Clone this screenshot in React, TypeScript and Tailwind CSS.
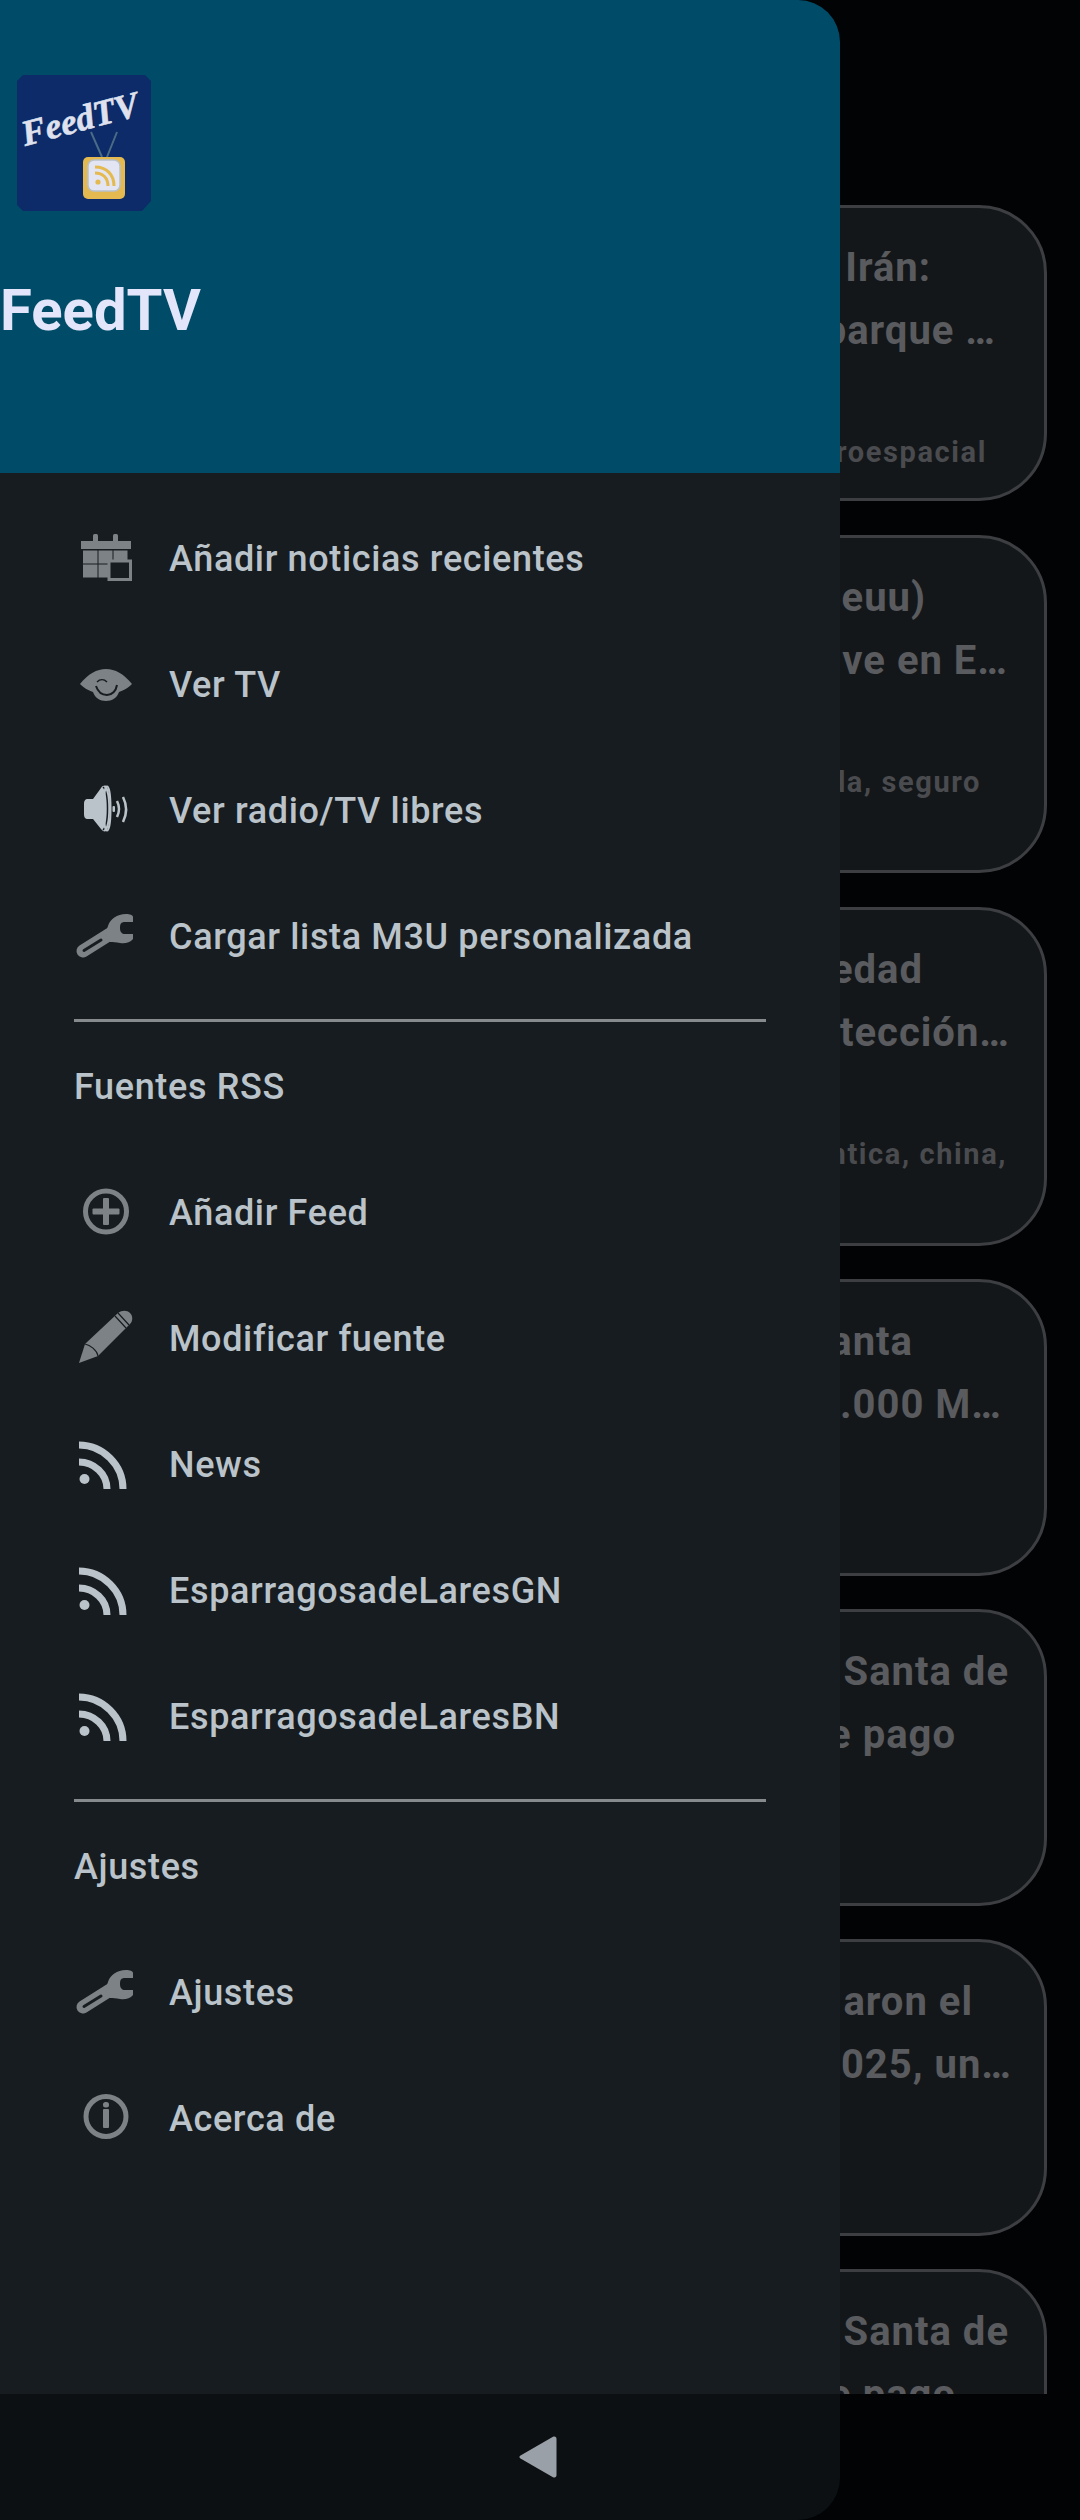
const Gray = "#7d8286";
const Light = "#bac3c9";
const Bg = "#171c20";

function Svg({ children }: { children: React.ReactNode }) {
  return (
    <svg viewBox="0 0 64 64" className="w-16 h-16 shrink-0">
      {children}
    </svg>
  );
}

const Calendar = () => (
  <Svg>
    <rect x="19" y="8" width="5" height="10" rx="1.5" fill={Gray} />
    <rect x="39" y="8" width="5" height="10" rx="1.5" fill={Gray} />
    <rect x="7" y="15" width="50" height="8" fill={Gray} />
    <g fill={Gray}>
      <rect x="9" y="24.500" width="14.500" height="13" />
      <rect x="24.500" y="24.500" width="14" height="13" />
      <rect x="39.500" y="24.500" width="14" height="13" />
      <rect x="9" y="38.500" width="14.500" height="13" />
      <rect x="24.500" y="38.500" width="10" height="13" />
    </g>
    <rect x="35" y="35" width="21.5" height="18.5" fill={Bg} stroke={Gray} strokeWidth="3" />
  </Svg>
);

const Eye = () => (
  <Svg>
    <path d="M6 32C14 22 23 17 32 17C41 17 50 22 58 32C53 37 48 39 45 40C43 46 38 49 32 49C26 49 21 46 19 40C16 39 11 37 6 32Z" fill={Gray} />
    <path d="M22 34C24 40 28 43 33 43C38 43 42 39 43 33" fill="none" stroke={Bg} strokeWidth="2" />
    <path d="M23 30C26 27 30 27 33 30" fill="none" stroke={Bg} strokeWidth="1.5" />
  </Svg>
);

const Speaker = () => (
  <Svg>
    <path d="M14 21H19L27 10C29 7 32 7 33 9C37 15 37 46 33 52C32 54 29 54 27 51L19 41H14C11 41 10 39 10 36V26C10 23 11 21 14 21Z" fill={Light} />
    <path d="M29 9C35 14 35 47 29 52" fill="none" stroke={Bg} strokeWidth="1.5" />
    <ellipse cx="33" cy="30.5" rx="3.5" ry="22" fill="none" stroke={Light} strokeWidth="2" />
    <rect x="38.500" y="28" width="2.500" height="6" rx="1" fill={Light} />
    <path d="M43 23C45.500 28 45.500 34 43 39" fill="none" stroke={Light} strokeWidth="2.500" />
    <path d="M49 19C53 27 53 36 49 44" fill="none" stroke={Light} strokeWidth="2.500" />
  </Svg>
);

const Wrench = () => (
  <Svg>
    <path d="M9 47L36 30" stroke={Gray} strokeWidth="13" strokeLinecap="round" fill="none" />
    <path d="M10 46.500L27 36" stroke={Bg} strokeWidth="3" strokeLinecap="round" fill="none" />
    <path d="M34 22C36 15 43 10 52 10C56 10 59 11 59 13L59 18L51 18C47 18 46 20 46 24C46 28 48 30 51 30L59 30L59 35C56 39 50 40 46 39C42 38 39 38 36 38L31 30Z" fill={Gray} />
  </Svg>
);

const Plus = () => (
  <Svg>
    <circle cx="32" cy="31.500" r="20.500" fill="none" stroke={Gray} strokeWidth="5" />
    <rect x="29" y="18" width="6" height="27" rx="1" fill={Gray} />
    <rect x="18.500" y="28.500" width="27" height="6" rx="1" fill={Gray} />
  </Svg>
);

const Pencil = () => (
  <Svg>
    <path d="M5 57L11 38L44 7C48 4 53 4 56 7C59 10 59 15 56 18L24 50Z" fill={Gray} />
    <path d="M11 38C16 39 23 44 24 50M41 10L52 22M44 7L55 19" fill="none" stroke={Bg} strokeWidth="1.2" />
  </Svg>
);

const Rss = () => (
  <Svg>
    <circle cx="10.500" cy="47" r="5" fill={Light} />
    <path d="M5 30C20 30 33 42 33 57" fill="none" stroke={Light} strokeWidth="7" />
    <path d="M5 13C29 13 49 33 49 57" fill="none" stroke={Light} strokeWidth="7" />
  </Svg>
);

const Info = () => (
  <Svg>
    <circle cx="32" cy="30.500" r="20" fill="none" stroke={Gray} strokeWidth="5" />
    <rect x="29" y="16" width="6" height="5.500" rx="2.500" fill={Gray} />
    <rect x="29" y="23" width="6" height="19" rx="1" fill={Gray} />
  </Svg>
);

function Row({ icon, label }: { icon: React.ReactNode; label: string }) {
  return (
    <div className="h-[126px] flex items-center pl-[74px] gap-[31px] text-[36px] tracking-[0.64px] font-medium text-[#bac3c9]">
      {icon}
      <span className="whitespace-nowrap pt-[2px]">{label}</span>
    </div>
  );
}

function Section({ label }: { label: string }) {
  return (
    <>
      <div className="mt-[20px] ml-[74px] w-[692px] h-[3px] bg-[#868a8d]" />
      <div className="h-[127px] flex items-center pl-[74px] pt-[2px] text-[36px] tracking-[0.64px] font-medium text-[#bac3c9]">{label}</div>
    </>
  );
}

function Logo() {
  return (
    <svg viewBox="0 0 134 136" className="w-[134px] h-[136px] block">
      <path d="M6 0H128L134 6V126L125 136H6L0 130V6Z" fill="#0d2a69" />
      <text
        x="8"
        y="71"
        fontFamily="'Liberation Serif', serif"
        fontWeight="700"
        fontStyle="italic"
        fontSize="36"
        fill="#dfe2ee"
        stroke="#dfe2ee"
        strokeWidth="0.6"
        transform="rotate(-15 8 71)"
      >
        FeedTV
      </text>
      <path d="M74 57L85 82M100 57L90 82" stroke="#4a6b85" strokeWidth="2" fill="none" />
      <rect x="66" y="82" width="42" height="42" rx="5" fill="#e4b950" />
      <rect x="71" y="85" width="32" height="31" rx="6" fill="#e3e6f2" stroke="#b9c1c9" strokeWidth="1.500" />
      <circle cx="81" cy="107" r="2.600" fill="#e4b950" />
      <path d="M78 98C86 98 91 103 91 111" fill="none" stroke="#e4b950" strokeWidth="3" />
      <path d="M78 92C90 92 97 100 97 111" fill="none" stroke="#e4b950" strokeWidth="3" />
    </svg>
  );
}

type CardProps = {
  className: string;
  lines: { t: string; c: string }[];
};

function Card({ className, lines }: CardProps) {
  return (
    <div className={`w-[1047px] rounded-[68px] border-[3px] border-[#3c3e41] bg-[#14171a] flex flex-col items-end shrink-0 pt-[28px] ${className}`}>
      {lines.map((l) => (
        <div key={l.t} className={`whitespace-nowrap ${l.c}`}>
          {l.t}
        </div>
      ))}
    </div>
  );
}

const title = "h-[63px] leading-[63px] text-[40px] tracking-[1px] font-bold text-[#5a5b5e]";
const meta = "h-[40px] leading-[40px] text-[29px] font-bold tracking-[1.6px] text-[#4a4b4e]";

export default function App() {
  return (
    <div className="relative w-[1080px] h-[2520px] overflow-hidden bg-[#010305] font-['Roboto',sans-serif]">
      <div className="h-[2394px] overflow-hidden pt-[205px] flex flex-col gap-[33.7px]">
        <Card
          className="h-[296.3px]"
          lines={[
            { t: "Irán:", c: `${title} mr-[113px]` },
            { t: "parque …", c: `${title} mr-[48px]` },
            { t: "roespacial", c: `${meta} mt-[70px] mr-[57px]` },
          ]}
        />
        <Card
          className="h-[338px]"
          lines={[
            { t: "(eeuu)", c: `${title} mr-[118px]` },
            { t: "ve en E…", c: `${title} mr-[36px]` },
            { t: "ayuda, seguro", c: `${meta} mt-[70px] mr-[63px]` },
          ]}
        />
        <Card
          className="h-[339px]"
          lines={[
            { t: "edad", c: `${title} mr-[121px]` },
            { t: "protección…", c: `${title} mr-[34px]` },
            { t: "atlántica, china,", c: `${meta} mt-[70px] mr-[37px]` },
          ]}
        />
        <Card
          className="h-[296.3px]"
          lines={[
            { t: "Santa", c: `${title} mr-[131px]` },
            { t: ".000 M…", c: `${title} mr-[42px]` },
          ]}
        />
        <Card
          className="h-[296.3px]"
          lines={[
            { t: "Santa de", c: `${title} mr-[35px]` },
            { t: "de pago", c: `${title} mr-[88px]` },
          ]}
        />
        <Card
          className="h-[296.3px]"
          lines={[
            { t: "aron el", c: `${title} mr-[71px]` },
            { t: "025, un…", c: `${title} mr-[32px]` },
          ]}
        />
        <Card
          className="h-[296.3px]"
          lines={[
            { t: "Santa de", c: `${title} mr-[35px]` },
            { t: "de pago", c: `${title} mr-[88px]` },
          ]}
        />
      </div>

      <aside className="absolute inset-y-0 left-0 w-[840px] rounded-r-[42px] overflow-hidden flex flex-col">
        <header className="h-[473px] bg-[#004c68] shrink-0">
          <div className="pl-[17px] pt-[75px]">
            <Logo />
          </div>
          <div className="mt-[65px] text-[58px] leading-[68px] font-bold text-[#e3e6fa]">FeedTV</div>
        </header>
        <nav className="flex-1 bg-[#171c20] pt-[22px]">
          <Row icon={<Calendar />} label="Añadir noticias recientes" />
          <Row icon={<Eye />} label="Ver TV" />
          <Row icon={<Speaker />} label="Ver radio/TV libres" />
          <Row icon={<Wrench />} label="Cargar lista M3U personalizada" />
          <Section label="Fuentes RSS" />
          <Row icon={<Plus />} label="Añadir Feed" />
          <Row icon={<Pencil />} label="Modificar fuente" />
          <Row icon={<Rss />} label="News" />
          <Row icon={<Rss />} label="EsparragosadeLaresGN" />
          <Row icon={<Rss />} label="EsparragosadeLaresBN" />
          <Section label="Ajustes" />
          <Row icon={<Wrench />} label="Ajustes" />
          <Row icon={<Info />} label="Acerca de" />
        </nav>
        <footer className="h-[126px] bg-[#0c1013] shrink-0 flex items-center pl-[519px]">
          <svg viewBox="0 0 38 42" className="w-[38px] h-[42px]">
            <path d="M1.500 19.500L34 .8C36 0 37.500 .8 37.500 3V39C37.500 41.200 36 42 34 41.200L1.500 22.500C0 21.500 0 20.500 1.500 19.500Z" fill="#9aa0a8" />
          </svg>
        </footer>
      </aside>
    </div>
  );
}
